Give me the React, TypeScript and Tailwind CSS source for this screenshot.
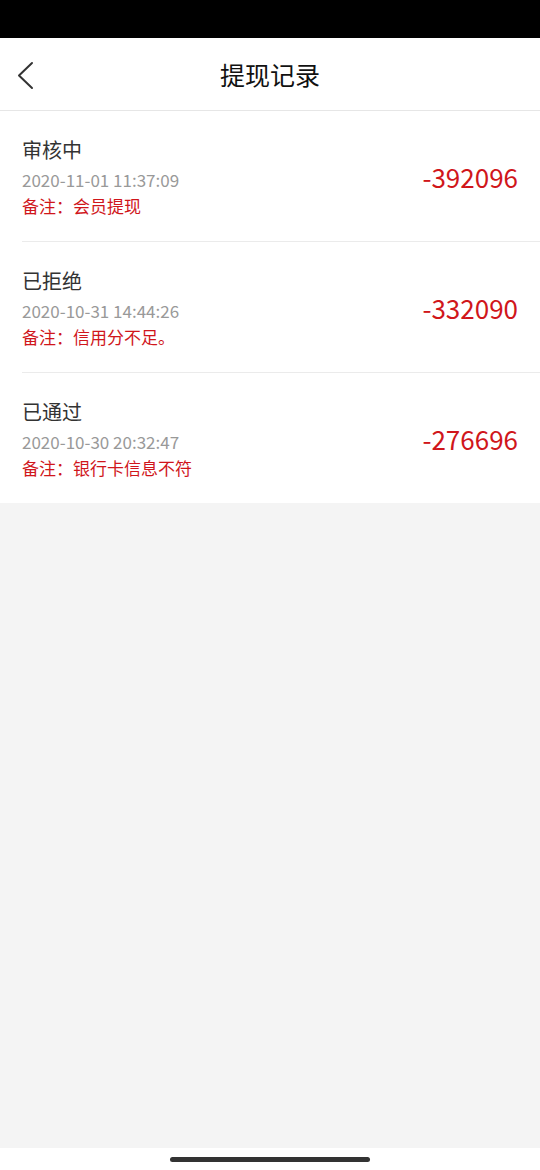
const records = [
  { status: "审核中", time: "2020-11-01 11:37:09", note: "备注：会员提现", amount: "-392096" },
  { status: "已拒绝", time: "2020-10-31 14:44:26", note: "备注：信用分不足。", amount: "-332090" },
  { status: "已通过", time: "2020-10-30 20:32:47", note: "备注：银行卡信息不符", amount: "-276696" },
];

export default function App() {
  return (
    <div
      className="flex h-[1170px] w-[540px] flex-col bg-[#f4f4f4]"
      style={{ fontFamily: '"Noto Sans CJK SC", "Noto Sans", sans-serif' }}
    >
      <div className="h-[38px] bg-black" />

      <div className="relative flex h-[73px] items-center justify-center border-b border-[#e6e6e6] bg-white">
        <button className="absolute left-[12px] top-[18px] p-1">
          <svg width="20" height="30" viewBox="0 0 20 30" fill="none">
            <path d="M16 3 L3 15.5 L16 28" stroke="#333" strokeWidth="2" strokeLinecap="round" strokeLinejoin="round" />
          </svg>
        </button>
        <h1 className="text-[25px] leading-none text-[#111]">提现记录</h1>
      </div>

      <div className="bg-white">
        {records.map((r, i) => (
          <div
            key={i}
            className={`ml-[22px] flex items-center justify-between pr-[22px] ${
              i < records.length - 1 ? "border-b border-[#ebebeb]" : ""
            }`}
          >
            <div className="pb-[22px] pt-[25px]">
              <div className="text-[20px] leading-[28px] text-[#333]">{r.status}</div>
              <div className="mt-[3px] text-[17px] leading-[26px] text-[#999]">{r.time}</div>
              <div className="text-[17px] leading-[26px] text-[#d0161b]">{r.note}</div>
            </div>
            <div className="pt-[1px] text-[26px] leading-none text-[#d0161b]">{r.amount}</div>
          </div>
        ))}
      </div>

      <div className="flex-1" />

      <div className="flex h-[22px] items-start justify-center bg-white pt-[9px]">
        <div className="h-[5px] w-[200px] rounded-full bg-[#333]" />
      </div>
    </div>
  );
}
